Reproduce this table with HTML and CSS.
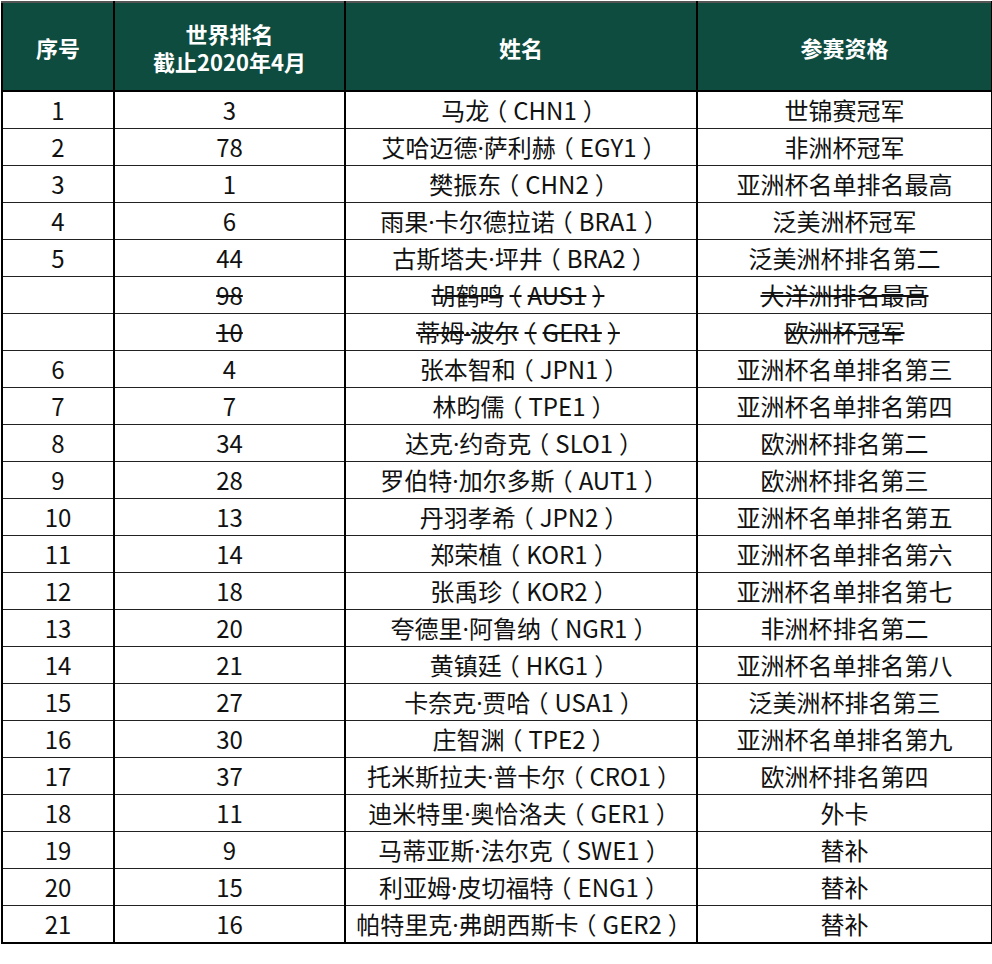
FILE: index.html
```html
<!DOCTYPE html>
<html lang="zh">
<head>
<meta charset="utf-8">
<link rel="stylesheet" href="styles.css">
</head>
<body>
<table class="tbl">
<colgroup><col class="c1"><col class="c2"><col class="c3"><col class="c4"></colgroup>
<thead>
<tr><th>序号</th><th><span class="hl">世界排名</span><span class="hl">截止2020年4月</span></th><th>姓名</th><th>参赛资格</th></tr>
</thead>
<tbody>
<tr><td>1</td><td>3</td><td>马龙<span class="p">（</span>CHN1<span class="p">）</span></td><td>世锦赛冠军</td></tr>
<tr><td>2</td><td>78</td><td>艾哈迈德<span class="dot">·</span>萨利赫<span class="p">（</span>EGY1<span class="p">）</span></td><td>非洲杯冠军</td></tr>
<tr><td>3</td><td>1</td><td>樊振东<span class="p">（</span>CHN2<span class="p">）</span></td><td>亚洲杯名单排名最高</td></tr>
<tr><td>4</td><td>6</td><td>雨果<span class="dot">·</span>卡尔德拉诺<span class="p">（</span>BRA1<span class="p">）</span></td><td>泛美洲杯冠军</td></tr>
<tr><td>5</td><td>44</td><td>古斯塔夫<span class="dot">·</span>坪井<span class="p">（</span>BRA2<span class="p">）</span></td><td>泛美洲杯排名第二</td></tr>
<tr class="struck"><td></td><td><s>98</s></td><td><s>胡鹤鸣<span class="p">（</span>AUS1<span class="p">）</span></s></td><td><s>大洋洲排名最高</s></td></tr>
<tr class="struck"><td></td><td><s>10</s></td><td><s>蒂姆<span class="dot">·</span>波尔<span class="p">（</span>GER1<span class="p">）</span></s></td><td><s>欧洲杯冠军</s></td></tr>
<tr><td>6</td><td>4</td><td>张本智和<span class="p">（</span>JPN1<span class="p">）</span></td><td>亚洲杯名单排名第三</td></tr>
<tr><td>7</td><td>7</td><td>林昀儒<span class="p">（</span>TPE1<span class="p">）</span></td><td>亚洲杯名单排名第四</td></tr>
<tr><td>8</td><td>34</td><td>达克<span class="dot">·</span>约奇克<span class="p">（</span>SLO1<span class="p">）</span></td><td>欧洲杯排名第二</td></tr>
<tr><td>9</td><td>28</td><td>罗伯特<span class="dot">·</span>加尔多斯<span class="p">（</span>AUT1<span class="p">）</span></td><td>欧洲杯排名第三</td></tr>
<tr><td>10</td><td>13</td><td>丹羽孝希<span class="p">（</span>JPN2<span class="p">）</span></td><td>亚洲杯名单排名第五</td></tr>
<tr><td>11</td><td>14</td><td>郑荣植<span class="p">（</span>KOR1<span class="p">）</span></td><td>亚洲杯名单排名第六</td></tr>
<tr><td>12</td><td>18</td><td>张禹珍<span class="p">（</span>KOR2<span class="p">）</span></td><td>亚洲杯名单排名第七</td></tr>
<tr><td>13</td><td>20</td><td>夸德里<span class="dot">·</span>阿鲁纳<span class="p">（</span>NGR1<span class="p">）</span></td><td>非洲杯排名第二</td></tr>
<tr><td>14</td><td>21</td><td>黄镇廷<span class="p">（</span>HKG1<span class="p">）</span></td><td>亚洲杯名单排名第八</td></tr>
<tr><td>15</td><td>27</td><td>卡奈克<span class="dot">·</span>贾哈<span class="p">（</span>USA1<span class="p">）</span></td><td>泛美洲杯排名第三</td></tr>
<tr><td>16</td><td>30</td><td>庄智渊<span class="p">（</span>TPE2<span class="p">）</span></td><td>亚洲杯名单排名第九</td></tr>
<tr><td>17</td><td>37</td><td>托米斯拉夫<span class="dot">·</span>普卡尔<span class="p">（</span>CRO1<span class="p">）</span></td><td>欧洲杯排名第四</td></tr>
<tr><td>18</td><td>11</td><td>迪米特里<span class="dot">·</span>奥恰洛夫<span class="p">（</span>GER1<span class="p">）</span></td><td>外卡</td></tr>
<tr><td>19</td><td>9</td><td>马蒂亚斯<span class="dot">·</span>法尔克<span class="p">（</span>SWE1<span class="p">）</span></td><td>替补</td></tr>
<tr><td>20</td><td>15</td><td>利亚姆<span class="dot">·</span>皮切福特<span class="p">（</span>ENG1<span class="p">）</span></td><td>替补</td></tr>
<tr><td>21</td><td>16</td><td>帕特里克<span class="dot">·</span>弗朗西斯卡<span class="p">（</span>GER2<span class="p">）</span></td><td>替补</td></tr>
</tbody>
</table>
</body>
</html>
```

FILE: styles.css
```css
html, body {
  margin: 0;
  padding: 0;
  background: #ffffff;
}
body {
  padding: 1px 1px 0 1px;
  font-family: "Noto Sans CJK SC", "Noto Sans", sans-serif;
  color: #111;
}
.tbl {
  width: 990px;
  border-collapse: collapse;
  border: 2px solid #000;
  table-layout: fixed;
}
.c1 { width: 112px; }
.c2 { width: 231px; }
.c3 { width: 352px; }
.c4 { width: 295px; }
.tbl th {
  background: #0e4c3f;
  color: #fff;
  font-weight: 700;
  font-size: 22px;
  line-height: 28px;
  height: 87px;
  padding: 0;
  border-left: 2px solid #000;
  border-right: 2px solid #000;
  border-bottom: 2px solid #000;
  border-top: 2px solid #555;
  text-align: center;
  vertical-align: middle;
}
.hl {
  display: block;
  line-height: 28px;
}
.tbl td {
  height: 36px;
  padding: 0;
  font-size: 24px;
  line-height: 30px;
  text-align: center;
  vertical-align: middle;
  border-left: 2px solid #000;
  border-right: 2px solid #000;
  border-top: 1px solid #222;
  border-bottom: 1px solid #222;
}
.tbl tbody tr:last-child td {
  border-bottom: 2px solid #000;
}
.p {
  font-feature-settings: "halt" 1;
  padding: 0 6px;
}
.dot {
  font-family: "Noto Sans", sans-serif;
}
.struck s {
  text-decoration: line-through;
  text-decoration-thickness: 2px;
}
```
